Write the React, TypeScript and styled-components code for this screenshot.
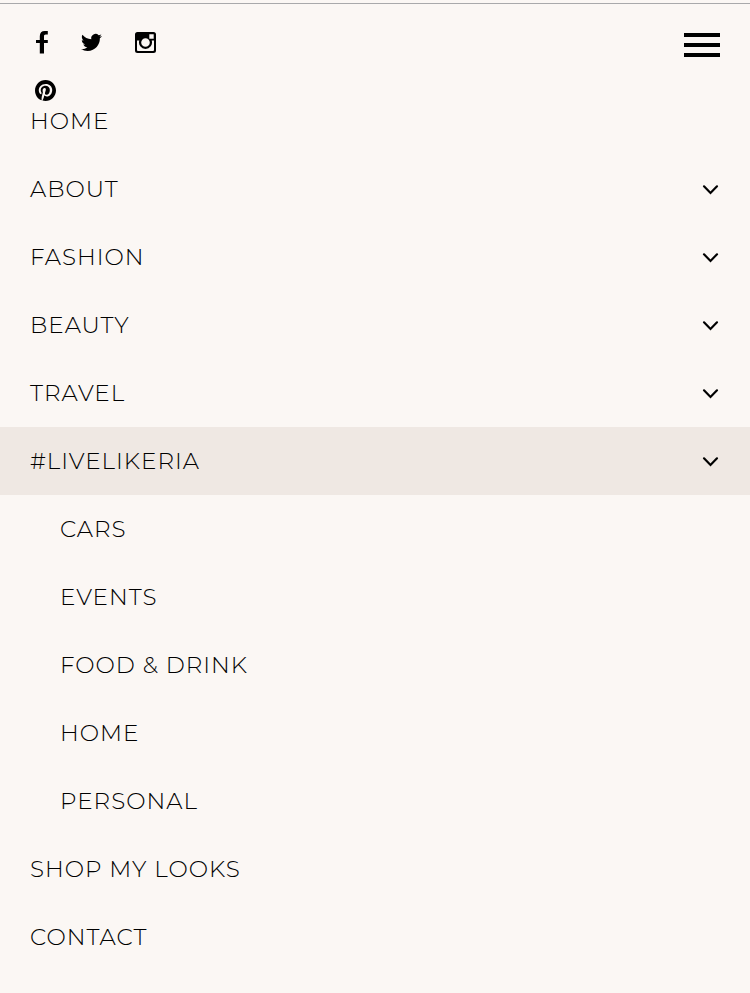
import React, { useState } from "react";
import styled, { createGlobalStyle } from "styled-components";

const GlobalStyle = createGlobalStyle`
  *, *::before, *::after { box-sizing: border-box; }
  body {
    margin: 0;
    background: #fbf7f4;
    color: #000;
    font-family: Montserrat, Inter, "Open Sans", sans-serif;
  }
`;

const Page = styled.div`
  min-height: 100vh;
  padding-top: 3px;
`;

const Header = styled.header`
  display: flex;
  justify-content: space-between;
  align-items: flex-start;
  padding: 25px 30px 1px;
  border-top: 1px solid #a9a9ab;
`;

const Social = styled.div`
  display: grid;
  grid-template-columns: 46px 54px 30px;
  row-gap: 22px;
`;

const SocialLink = styled.a`
  display: flex;
  align-items: center;
  height: 26px;
  padding-left: 5px;
  color: inherit;

  svg { display: block; fill: currentColor; }
`;

const MenuButton = styled.button`
  display: flex;
  flex-direction: column;
  gap: 6px;
  width: 36px;
  margin: 4px 0 0;
  padding: 0;
  border: 0;
  background: none;
  cursor: pointer;
`;

const Bar = styled.span`
  width: 100%;
  height: 4px;
  background: #000;
`;

const List = styled.ul`
  margin: 0;
  padding: 0;
  list-style: none;
`;

const Row = styled.div<{ $active?: boolean; $first?: boolean; $nested?: boolean }>`
  display: flex;
  align-items: center;
  justify-content: space-between;
  padding: ${(p) => (p.$first ? "0" : "17px")} 30px 17px ${(p) => (p.$nested ? "60px" : "30px")};
  background: ${(p) => (p.$active ? "#efe8e3" : "transparent")};
`;

const RowLink = styled.a`
  color: inherit;
  font-size: 23px;
  font-weight: 300;
  line-height: 34px;
  letter-spacing: 1px;
  text-decoration: none;
  text-transform: uppercase;
`;

const Toggle = styled.button`
  display: flex;
  margin: 0;
  padding: 0;
  border: 0;
  background: none;
  color: inherit;
  cursor: pointer;
`;

type Item = { label: string; children?: string[] };

const items: Item[] = [
  { label: "Home" },
  { label: "About", children: [] },
  { label: "Fashion", children: [] },
  { label: "Beauty", children: [] },
  { label: "Travel", children: [] },
  { label: "#LiveLikeRia", children: ["Cars", "Events", "Food & Drink", "Home", "Personal"] },
  { label: "Shop My Looks" },
  { label: "Contact" },
];

const Chevron = () => (
  <svg width="20" height="20" viewBox="0 0 20 20" fill="none" stroke="currentColor" strokeWidth="2.2" strokeLinecap="round" aria-hidden="true">
    <path d="M4 7.300 10.500 14 17 7.300" />
  </svg>
);

const Facebook = () => (
  <svg width="14" height="24" viewBox="0 0 14 24" aria-hidden="true">
    <path d="M12.800 1v3.600h-2c-1.400 0-1.800.8-1.800 1.800v3.600h3.800v3H9V23.500H4.800V13H1v-3h3.800V6.200C4.800 2.800 6.600.9 9.700.9c1.400 0 2.500.1 3.100.1z" />
  </svg>
);

const Twitter = () => (
  <svg width="21" height="21" viewBox="0 0 24 24" aria-hidden="true">
    <path d="M23.953 4.570a10 10 0 0 1-2.825.775 4.958 4.958 0 0 0 2.163-2.723c-.951.555-2.005.959-3.127 1.184a4.920 4.920 0 0 0-8.384 4.482C7.690 8.095 4.067 6.130 1.640 3.162a4.822 4.822 0 0 0-.666 2.475c0 1.710.870 3.213 2.188 4.096a4.904 4.904 0 0 1-2.228-.616v.060a4.923 4.923 0 0 0 3.946 4.827 4.996 4.996 0 0 1-2.212.085 4.936 4.936 0 0 0 4.604 3.417 9.867 9.867 0 0 1-6.102 2.105c-.390 0-.779-.023-1.170-.067a13.995 13.995 0 0 0 7.557 2.209c9.053 0 13.998-7.496 13.998-13.985 0-.210 0-.420-.015-.630A9.935 9.935 0 0 0 24 4.590z" />
  </svg>
);

const Instagram = () => (
  <svg width="21" height="21" viewBox="0 0 21 21" aria-hidden="true">
    <path
      fillRule="evenodd"
      d="M2.500 0h16a2.500 2.500 0 0 1 2.500 2.500v16a2.500 2.500 0 0 1-2.500 2.500h-16A2.500 2.500 0 0 1 0 18.500v-16A2.500 2.500 0 0 1 2.500 0zM14.300 2.300v4.400h4.400V2.300zM2 8.500v9.500a1 1 0 0 0 1 1h15a1 1 0 0 0 1-1V8.500h-2.300a6.500 6.500 0 1 1-12.400 0zM10.500 6.200a4.300 4.300 0 1 0 0 8.600 4.300 4.300 0 0 0 0-8.600z"
    />
  </svg>
);

const Pinterest = () => (
  <svg width="21" height="21" viewBox="0 0 496 496" aria-hidden="true">
    <path d="M496 248c0 137-111 248-248 248-25.600 0-50.200-3.900-73.400-11.100 10.100-16.500 25.200-43.500 30.800-65 3-11.600 15.400-59 15.400-59 8.100 15.400 31.700 28.500 56.800 28.500 74.800 0 128.700-68.800 128.700-154.300 0-81.900-66.900-143.200-152.900-143.200-107 0-163.900 71.800-163.900 150.100 0 36.400 19.400 81.700 50.300 96.100 4.700 2.200 7.200 1.200 8.300-3.300.8-3.400 5-20.300 6.900-28.100.6-2.500.3-4.700-1.700-7.100-10.100-12.500-18.300-35.300-18.300-56.600 0-54.700 41.400-107.600 112-107.600 60.900 0 103.600 41.500 103.600 100.900 0 67.100-33.900 113.600-78 113.600-24.300 0-42.600-20.100-36.700-44.800 7-29.500 20.500-61.300 20.500-82.600 0-19-10.200-34.900-31.400-34.900-24.900 0-44.900 25.700-44.900 60.200 0 22 7.400 36.800 7.400 36.800s-24.500 103.800-29 123.200c-5 21.400-3 51.600-.9 71.200C65.400 450.900 0 357.100 0 248 0 111 111 0 248 0s248 111 248 248z" />
  </svg>
);

const networks = [
  { name: "Facebook", Icon: Facebook },
  { name: "Twitter", Icon: Twitter },
  { name: "Instagram", Icon: Instagram },
  { name: "Pinterest", Icon: Pinterest },
];

export default function App() {
  const [menuOpen, setMenuOpen] = useState(true);
  const [expanded, setExpanded] = useState("#LiveLikeRia");

  return (
    <>
      <GlobalStyle />
      <Page>
        <Header>
          <Social>
            {networks.map(({ name, Icon }) => (
              <SocialLink key={name} href="#" aria-label={name}>
                <Icon />
              </SocialLink>
            ))}
          </Social>
          <MenuButton aria-label="Menu" aria-expanded={menuOpen} onClick={() => setMenuOpen(!menuOpen)}>
            <Bar />
            <Bar />
            <Bar />
          </MenuButton>
        </Header>
        {menuOpen && (
          <nav aria-label="Main">
            <List>
              {items.map(({ label, children }, i) => {
                const open = !!children && expanded === label;
                return (
                  <li key={label}>
                    <Row $first={i === 0} $active={open}>
                      <RowLink href="#">{label}</RowLink>
                      {children && (
                        <Toggle
                          aria-label={`Toggle ${label} submenu`}
                          aria-expanded={open}
                          onClick={() => setExpanded(open ? "" : label)}
                        >
                          <Chevron />
                        </Toggle>
                      )}
                    </Row>
                    {open && (
                      <List>
                        {children.map((child) => (
                          <li key={child}>
                            <Row $nested>
                              <RowLink href="#">{child}</RowLink>
                            </Row>
                          </li>
                        ))}
                      </List>
                    )}
                  </li>
                );
              })}
            </List>
          </nav>
        )}
      </Page>
    </>
  );
}
